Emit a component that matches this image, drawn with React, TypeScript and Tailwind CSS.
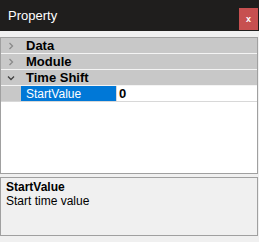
import React from 'react';

const categories = ['Data', 'Module'];

function Chevron({ open }: { open?: boolean }) {
  return (
    <svg width="8" height="8" viewBox="0 0 8 8" className="block">
      {open ? (
        <path d="M1 2.5 L4 5.5 L7 2.5" fill="none" stroke="#404040" strokeWidth="1.3" />
      ) : (
        <path d="M2.5 1 L5.5 4 L2.5 7" fill="none" stroke="#8a8a8a" strokeWidth="1.3" />
      )}
    </svg>
  );
}

export default function App() {
  return (
    <div className="w-[259px] h-[242px] bg-[#f0f0f0] flex flex-col font-['Liberation_Sans',sans-serif] text-[12px] overflow-hidden">
      {/* Title bar */}
      <div className="h-[31px] bg-[#1f1e1d] flex items-start justify-between shrink-0">
        <span className="text-white text-[13px] pl-[8px] pt-[8px] leading-[16px]">Property</span>
        <button className="mt-[8px] mr-[1px] w-[19px] h-[22px] bg-[#c75050] text-white text-[9px] font-bold leading-none flex items-center justify-center">
          x
        </button>
      </div>

      {/* Property grid */}
      <div className="mt-[6px] w-[258px] h-[137px] border border-[#a0a0a0] bg-white flex flex-col shrink-0">
        {categories.map((c) => (
          <div key={c} className="h-[16px] bg-[#c8c8c8] border-b border-[#f4f4f4] flex items-center">
            <div className="w-[20px] flex justify-center">
              <Chevron />
            </div>
            <span className="pl-[5px] font-bold text-[13px] text-black leading-none">{c}</span>
          </div>
        ))}
        <div className="h-[16px] bg-[#c8c8c8] border-b border-[#f4f4f4] flex items-center">
          <div className="w-[20px] flex justify-center">
            <Chevron open />
          </div>
          <span className="pl-[5px] font-bold text-[13px] text-black leading-none">Time Shift</span>
        </div>
        <div className="h-[16px] flex border-b border-[#d8d8d8]">
          <div className="w-[20px] bg-[#c8c8c8]" />
          <div className="w-[95px] bg-[#0078d7] text-white flex items-center pl-[5px] leading-none">
            StartValue
          </div>
          <div className="w-px bg-[#d8d8d8]" />
          <div className="flex-1 flex items-center pl-[2px] font-bold text-[13px] text-black leading-none">0</div>
        </div>
      </div>

      {/* Help panel */}
      <div className="mt-[3px] w-[258px] h-[59px] border border-[#a0a0a0] bg-[#f0f0f0] px-[5px] pt-[2px] leading-[14px] text-black shrink-0">
        <div className="font-bold">StartValue</div>
        <div>Start time value</div>
      </div>
    </div>
  );
}
